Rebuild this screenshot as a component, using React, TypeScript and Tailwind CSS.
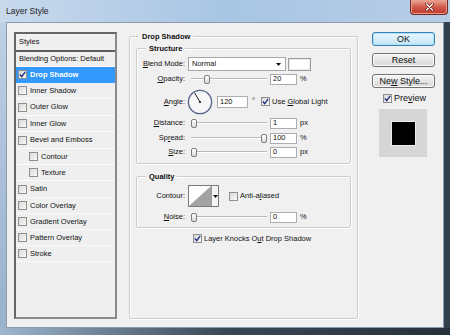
import { FC, ReactNode } from 'react'
import clsx from 'clsx'

const U: FC<{ children: ReactNode }> = ({ children }) => (
  <span className="underline decoration-[0.5px] underline-offset-[1px]">{children}</span>
)

const Check: FC<{ checked?: boolean }> = ({ checked }) => (
  <span className="flex h-[9px] w-[9px] shrink-0 items-center justify-center border border-[#8e8f8f] bg-gradient-to-br from-[#d8d8d8] to-[#fafafa]">
    {checked && (
      <svg width="7" height="7" viewBox="0 0 7 7">
        <path d="M0.8 3.6 L2.8 5.6 L6.2 0.9" fill="none" stroke="#23337f" strokeWidth="1.4" />
      </svg>
    )}
  </span>
)

const Field: FC<{ value: string; wide?: boolean }> = ({ value, wide }) => (
  <div
    className={clsx(
      'flex items-center border border-[#abadb3] bg-white pl-[2px] leading-none',
      wide ? 'h-[12px] w-[31px]' : 'h-[11px] w-[27px]'
    )}
  >
    {value}
  </div>
)

const Slider: FC<{ thumb: string }> = ({ thumb }) => (
  <div className="relative ml-[6px] flex h-[12px] w-[76px] items-center">
    <div className="h-[2px] w-full border-t border-[#b9b9b9] border-b border-b-white" />
    <div
      className={clsx(
        'absolute top-[2px] h-[9px] w-[6px] rounded-[2px] border border-[#7d7d7d] bg-gradient-to-b from-white to-[#d9d9d9]',
        thumb
      )}
    />
  </div>
)

const SliderRow: FC<{ label: ReactNode; thumb: string; value: string; unit: string; className?: string }> = ({
  label,
  thumb,
  value,
  unit,
  className,
}) => (
  <div className={clsx('flex h-[12px] items-center', className)}>
    <div className="w-[48px] text-right">{label}</div>
    <Slider thumb={thumb} />
    <div className="ml-[3px]">
      <Field value={value} />
    </div>
    <div className="ml-[3px]">{unit}</div>
  </div>
)

const Group: FC<{ title: string; className?: string; children: ReactNode }> = ({ title, className, children }) => (
  <div
    className={clsx(
      'relative rounded-[2px] border border-[#cdcdcd] shadow-[inset_1px_1px_0_#ffffff,1px_1px_0_#ffffff]',
      className
    )}
  >
    <div className="absolute left-[9px] top-[-6px] bg-[#f0f0f0] px-[3px] font-bold leading-[11px]">{title}</div>
    {children}
  </div>
)

const styles = [
  { label: 'Drop Shadow', checked: true, h: 'h-[16px]' },
  { label: 'Inner Shadow', h: 'h-[16px]' },
  { label: 'Outer Glow', h: 'h-[17px]' },
  { label: 'Inner Glow', h: 'h-[16px]' },
  { label: 'Bevel and Emboss', h: 'h-[17px]' },
  { label: 'Contour', indent: true, h: 'h-[16px]' },
  { label: 'Texture', indent: true, h: 'h-[16px]' },
  { label: 'Satin', h: 'h-[17px]' },
  { label: 'Color Overlay', h: 'h-[16px]' },
  { label: 'Gradient Overlay', h: 'h-[16px]' },
  { label: 'Pattern Overlay', h: 'h-[16px]' },
  { label: 'Stroke', h: 'h-[16px]' },
]

const StylesList: FC = () => (
  <div className="flex h-[287px] w-[103px] shrink-0 flex-col border-2 border-[#656565] border-b-[#8a8a8a] border-r-[#8a8a8a] bg-[#efefef]">
    <div className="flex h-[18px] items-center border-b-2 border-[#5c5c5c] pl-[3px]">Styles</div>
    <div className="flex h-[15px] items-center border-b border-[#fafafa] pl-[3px]">Blending Options: Default</div>
    {styles.map((s, i) => (
      <div
        key={s.label}
        className={clsx(
          'flex items-center gap-[3px] border-b',
          s.h,
          i === 0 ? 'border-[#3399ff] bg-[#3399ff] font-bold text-white' : 'border-[#fafafa]',
          s.indent ? 'pl-[13px]' : 'pl-[2px]'
        )}
      >
        <Check checked={s.checked} />
        <span>{s.label}</span>
      </div>
    ))}
  </div>
)

const Dial: FC = () => (
  <svg width="26" height="26" viewBox="0 0 26 26" className="ml-[2px]">
    <circle cx="13" cy="13" r="11.6" fill="#f7f7f7" stroke="#56658a" strokeWidth="1.4" />
    <line x1="13" y1="13" x2="7.6" y2="3.8" stroke="#1c1c1c" strokeWidth="1" />
    <circle cx="13" cy="13" r="1.1" fill="#1c1c1c" />
  </svg>
)

const Contour: FC = () => (
  <div className="ml-[3px] flex h-[22px] w-[31px] border border-[#7a7a7a] bg-white">
    <svg width="22" height="20" viewBox="0 0 22 20" className="shrink-0">
      <polygon points="0,20 22,0 22,20" fill="#a3a3a3" />
    </svg>
    <div className="flex flex-1 items-center justify-center border-l border-[#9a9a9a] bg-[#f4f4f4]">
      <svg width="5" height="3" viewBox="0 0 5 3">
        <polygon points="0,0 5,0 2.5,3" fill="#111" />
      </svg>
    </div>
  </div>
)

const Button: FC<{ children: ReactNode; primary?: boolean; className?: string }> = ({ children, primary, className }) => (
  <div
    className={clsx(
      'flex h-[14px] w-[63px] items-center justify-center rounded-[3px] border text-[9px] leading-none',
      primary
        ? 'border-[#3c7fb1] bg-gradient-to-b from-[#eaf6fd] to-[#c4e5f6] shadow-[inset_0_0_0_1px_#a8e4fb]'
        : 'border-[#707070] bg-gradient-to-b from-[#f4f4f4] to-[#d8d8d8] shadow-[inset_0_0_0_1px_#fbfbfb]',
      className
    )}
  >
    {children}
  </div>
)

export default function App() {
  return (
    <div className="flex h-[335px] w-[450px] flex-col overflow-hidden bg-[#2f3b47] font-['Liberation_Sans',Arial,sans-serif] text-[7.5px] text-[#111]">
      <div className="flex h-[22px] shrink-0 items-start justify-between bg-gradient-to-r from-[#c8d9ec] via-[#a8c5e5] to-[#b7cde6] pr-[2px]">
        <div className="mt-[5px] pl-[6px] text-[8.5px] leading-[12px] text-[#1b1b1b]">Layer Style</div>
        <div className="flex h-[15px] w-[38px] items-center justify-center rounded-b-[4px] border border-t-0 border-[#6e2b24] bg-gradient-to-b from-[#e9a99a] via-[#d0594a] to-[#c0392b] shadow-[inset_0_0_0_1px_#eb9c8c]">
          <svg width="9" height="8" viewBox="0 0 9 8">
            <path d="M1.5 1 L7.5 7 M7.5 1 L1.5 7" stroke="#5a1a14" strokeWidth="2.6" strokeLinecap="round" />
            <path d="M1.5 1 L7.5 7 M7.5 1 L1.5 7" stroke="#ffffff" strokeWidth="1.4" strokeLinecap="round" />
          </svg>
        </div>
      </div>

      <div className="flex h-[306px] shrink-0">
        <div className="w-[6px] bg-gradient-to-b from-[#bdd0e6] to-[#98b1cc]" />
        <div className="flex h-[306px] w-[438px] items-start border border-[#8d9cad] bg-[#f0f0f0] pl-[7px] pt-[9px]">
          <StylesList />

          <Group title="Drop Shadow" className="ml-[12px] mt-[4px] h-[283px] w-[229px] shrink-0">
            <div className="ml-[6px] mt-[11px] flex flex-col">
              <Group title="Structure" className="h-[116px] w-[215px]">
                <div className="flex flex-col pt-[8px]">
                  <div className="flex h-[14px] items-center">
                    <div className="w-[48px] text-right">
                      <U>B</U>lend Mode:
                    </div>
                    <div className="ml-[3px] flex h-[14px] w-[98px] items-center justify-between border border-[#a5a5a5] bg-white pl-[3px] pr-[4px]">
                      <span>Normal</span>
                      <svg width="5" height="3" viewBox="0 0 5 3">
                        <polygon points="0,0 5,0 2.5,3" fill="#111" />
                      </svg>
                    </div>
                    <div className="ml-[2px] h-[13px] w-[23px] border border-[#9c9c9c] bg-white shadow-[inset_0_0_0_1px_#ececec]" />
                  </div>
                  <SliderRow
                    className="mt-[2px]"
                    label={
                      <>
                        <U>O</U>pacity:
                      </>
                    }
                    thumb="left-[13px]"
                    value="20"
                    unit="%"
                  />
                  <div className="mt-[3px] flex h-[27px] items-center">
                    <div className="w-[48px] text-right">
                      <U>A</U>ngle:
                    </div>
                    <Dial />
                    <div className="ml-[4px]">
                      <Field value="120" wide />
                    </div>
                    <div className="ml-[4px] self-start pt-[7px]">°</div>
                    <div className="ml-[6px] flex items-center gap-[2px]">
                      <Check checked />
                      <span>
                        Use <U>G</U>lobal Light
                      </span>
                    </div>
                  </div>
                  <SliderRow
                    className="mt-[2px]"
                    label={
                      <>
                        <U>D</U>istance:
                      </>
                    }
                    thumb="left-0"
                    value="1"
                    unit="px"
                  />
                  <SliderRow
                    className="mt-[3px]"
                    label={
                      <>
                        Sp<U>r</U>ead:
                      </>
                    }
                    thumb="left-[70px]"
                    value="100"
                    unit="%"
                  />
                  <SliderRow
                    className="mt-[2px]"
                    label={
                      <>
                        <U>S</U>ize:
                      </>
                    }
                    thumb="left-0"
                    value="0"
                    unit="px"
                  />
                </div>
              </Group>

              <Group title="Quality" className="mt-[12px] h-[52px] w-[215px]">
                <div className="flex flex-col pt-[8px]">
                  <div className="flex h-[22px] items-center">
                    <div className="w-[48px] text-right">Contour:</div>
                    <Contour />
                    <div className="ml-[10px] flex items-center gap-[2px]">
                      <Check />
                      <span>
                        Anti-a<U>l</U>iased
                      </span>
                    </div>
                  </div>
                  <SliderRow
                    className="mt-[4px]"
                    label={
                      <>
                        <U>N</U>oise:
                      </>
                    }
                    thumb="left-0"
                    value="0"
                    unit="%"
                  />
                </div>
              </Group>

              <div className="ml-[57px] mt-[6px] flex h-[9px] items-center gap-[2px]">
                <Check checked />
                <span>
                  Layer Knocks O<U>u</U>t Drop Shadow
                </span>
              </div>
            </div>
          </Group>

          <div className="ml-[14px] flex w-[63px] shrink-0 flex-col">
            <Button primary>OK</Button>
            <Button className="mt-[7px]">Reset</Button>
            <Button className="mt-[7px]">
              <span>
                Ne<U>w</U> Style...
              </span>
            </Button>
            <div className="mt-[6px] flex items-center gap-[2px] pl-[11px] text-[9px] leading-[9px]">
              <Check checked />
              <span>
                Pre<U>v</U>iew
              </span>
            </div>
            <div className="ml-[7px] mt-[6px] flex h-[48px] w-[48px] items-center justify-center bg-[#d6d6d6]">
              <div className="h-[25px] w-[25px] border border-[#ececec] bg-black" />
            </div>
          </div>
        </div>
        <div className="w-[6px] bg-[#323f4c]" />
      </div>

      <div className="h-[7px] shrink-0 bg-gradient-to-r from-[#9fb7cf] via-[#3a4856] to-[#27313b]" />
    </div>
  )
}
